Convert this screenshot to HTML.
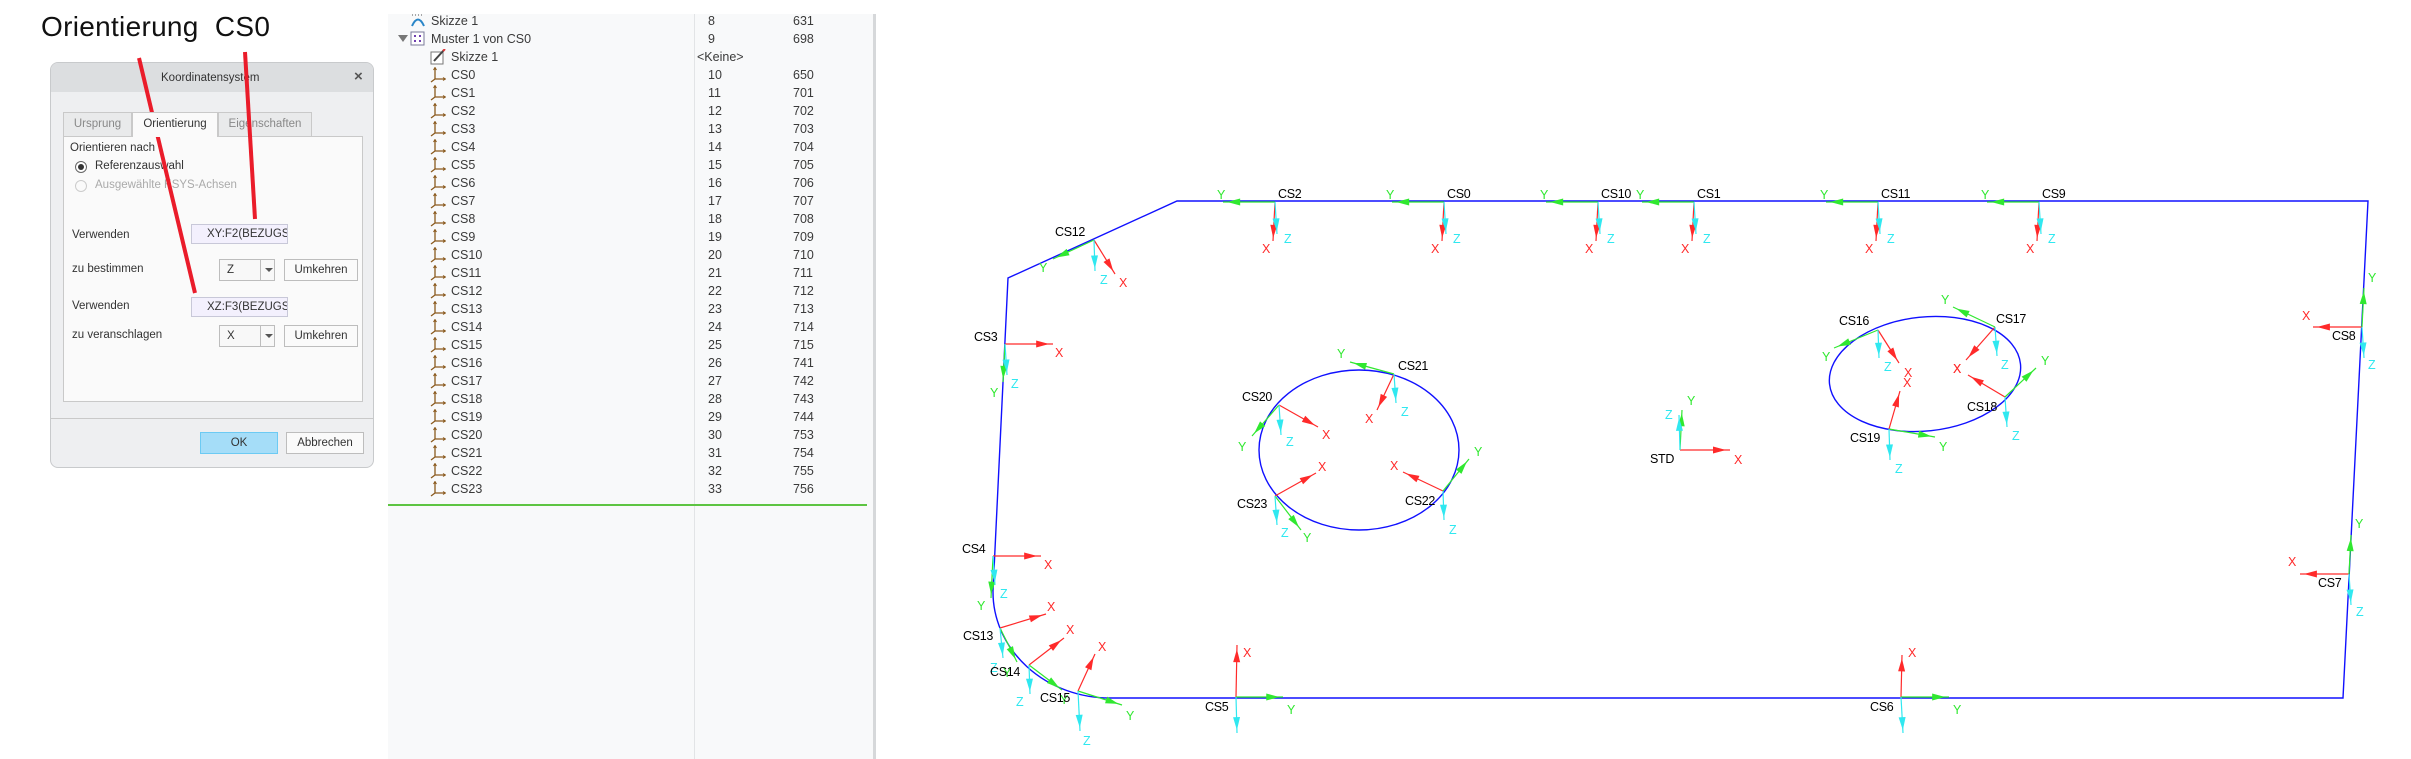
<!DOCTYPE html>
<html><head><meta charset="utf-8">
<style>
*{margin:0;padding:0;box-sizing:border-box}
body{width:2411px;height:759px;background:#fff;position:relative;overflow:hidden;font-family:"Liberation Sans",sans-serif}
.a{position:absolute;white-space:nowrap}
.dlg{position:absolute;left:50px;top:62px;width:324px;height:406px;background:#eeeff1;border:1px solid #c8cacc;border-radius:8px;overflow:hidden}
.hdr{position:absolute;left:0;top:0;width:100%;height:29px;background:#dcdee0}
.t{font-size:11.5px;color:#333}
.tab{position:absolute;top:49px;height:24px;border:1px solid #c9c9c9;border-bottom:none;background:#e9eaeb;font-size:11.5px;color:#888;text-align:center;line-height:22px}
.panel{position:absolute;left:12px;top:73px;width:300px;height:266px;background:#fafafa;border:1px solid #c9c9c9}
.inp{position:absolute;width:97px;height:20px;background:#f3f0fd;border:1px solid #c8c8d8;font-size:11.5px;color:#333;line-height:18px;padding-left:15px;overflow:hidden}
.sel{position:absolute;width:56px;height:22px;background:#f8f8f8;border:1px solid #bdbdbd;font-size:11.5px;color:#333;line-height:20px;padding-left:7px}
.sel:after{content:"";position:absolute;left:40px;top:0;width:1px;height:20px;background:#bdbdbd}
.sel b{position:absolute;left:45px;top:8px;border-left:4px solid transparent;border-right:4px solid transparent;border-top:4px solid #555}
.btn{position:absolute;width:74px;height:22px;background:#fafafa;border:1px solid #bdbdbd;font-size:11.5px;color:#333;text-align:center;line-height:20px}
.tree{position:absolute;left:388px;top:14px;width:487px;height:745px;background:#f8f9fa}
.row{position:absolute;font-size:12.5px;color:#3a3a3a;line-height:18px}
</style></head><body>
<div class="a" style="left:41px;top:11px;font-size:28px;color:#111;letter-spacing:0.3px">Orientierung&nbsp; CS0</div>

<div class="dlg">
 <div class="hdr"></div>
 <div class="a t" style="left:110px;top:9px">Koordinatensystem</div>
 <div class="a" style="left:303px;top:5px;font-size:15px;color:#555;font-weight:bold">×</div>
 <div class="tab" style="left:12px;width:69px">Ursprung</div>
 <div class="tab" style="left:81px;width:86px;background:#fafafa;color:#333;height:25px;z-index:2">Orientierung</div>
 <div class="tab" style="left:167px;width:94px">Eigenschaften</div>
 <div class="panel">
  <div class="a t" style="left:6px;top:5px">Orientieren nach</div>
  <div class="a" style="left:11px;top:24px;width:12px;height:12px;border:1px solid #666;border-radius:50%;background:#fff"><div style="position:absolute;left:2px;top:2px;width:6px;height:6px;border-radius:50%;background:#333"></div></div>
  <div class="a t" style="left:31px;top:23px">Referenzauswahl</div>
  <div class="a" style="left:11px;top:43px;width:12px;height:12px;border:1px solid #ccc;border-radius:50%"></div>
  <div class="a t" style="left:31px;top:42px;color:#aaa">Ausgewählte KSYS-Achsen</div>
  <div class="a t" style="left:8px;top:92px">Verwenden</div>
  <div class="a t" style="left:8px;top:126px">zu bestimmen</div>
  <div class="a t" style="left:8px;top:163px">Verwenden</div>
  <div class="a t" style="left:8px;top:192px">zu veranschlagen</div>
 </div>
 <div class="inp" style="left:140px;top:161px">XY:F2(BEZUGSE</div>
 <div class="sel" style="left:168px;top:196px">Z<b></b></div>
 <div class="btn" style="left:233px;top:196px">Umkehren</div>
 <div class="inp" style="left:140px;top:234px">XZ:F3(BEZUGSE</div>
 <div class="sel" style="left:168px;top:262px">X<b></b></div>
 <div class="btn" style="left:233px;top:262px">Umkehren</div>
 <div class="a" style="left:0;top:355px;width:100%;height:1px;background:#c9c9c9"></div>
 <div class="btn" style="left:149px;top:369px;width:78px;background:#a5ddf8;border-color:#6ccaf3">OK</div>
 <div class="btn" style="left:235px;top:369px;width:78px">Abbrechen</div>
</div>
<svg class="a" style="left:0;top:0" width="380" height="300">
 <line x1="139" y1="58" x2="195" y2="293" stroke="#ea1c2a" stroke-width="4"/>
 <line x1="245" y1="52" x2="255" y2="219" stroke="#ea1c2a" stroke-width="4"/>
</svg>

<div class="tree" id="tree"></div>
<div class="a" style="left:694px;top:14px;width:1px;height:745px;background:#e2e4e6"></div>
<div class="a" style="left:873px;top:14px;width:3px;height:745px;background:#d6d8da"></div>
<div class="a" style="left:388px;top:504px;width:479px;height:2px;background:#5dc442"></div>

<svg id="cad" class="a" style="left:0;top:0" width="2411" height="759" font-family="Liberation Sans, sans-serif"></svg>

<script>
var tr=document.getElementById('tree'),h='';
function row(i,x,txt,c2,c3,icon){var y=21+18*i-14-9;
 h+='<div class="row" style="left:'+(x-388)+'px;top:'+y+'px">'+txt+'</div>';
 if(c2)h+='<div class="row" style="left:'+(c2=='&lt;Keine&gt;'?697-388:708-388)+'px;top:'+y+'px">'+c2+'</div>';
 if(c3)h+='<div class="row" style="left:'+(793-388)+'px;top:'+y+'px">'+c3+'</div>';
 if(icon)h+='<div style="position:absolute;left:'+(x-388-21)+'px;top:'+(y+1)+'px">'+icon+'</div>';}
var csI='<svg width="16" height="16"><path d="M5 1V12H15M5 12L1 15" stroke="#8a5a1e" stroke-width="1.3" fill="none"/><path d="M3.5 3L5 0.5 6.5 3M13 10.5L15.5 12 13 13.5" stroke="#8a5a1e" fill="none"/></svg>';
row(0,431,'Skizze 1','8','631','<svg width="16" height="16"><path d="M2 13Q8 0 14 13" stroke="#2a86c8" stroke-width="2" fill="none"/><path d="M2 2H14" stroke="#555" stroke-dasharray="1 2"/></svg>');
row(1,431,'Muster 1 von CS0','9','698','<svg width="16" height="16"><rect x="1" y="1" width="13" height="13" fill="#fff" stroke="#7a7a9a"/><rect x="4" y="4" width="2" height="2" fill="#7040b0"/><rect x="9" y="4" width="2" height="2" fill="#7040b0"/><rect x="4" y="9" width="2" height="2" fill="#7040b0"/><rect x="9" y="9" width="2" height="2" fill="#7040b0"/></svg>');
h+='<div style="position:absolute;left:10px;top:21px;border-left:5px solid transparent;border-right:5px solid transparent;border-top:7px solid #777"></div>';
row(2,451,'Skizze 1','&lt;Keine&gt;','','<svg width="16" height="16"><rect x="1" y="3" width="12" height="12" fill="#fff" stroke="#777"/><path d="M4 12L14 1" stroke="#444" stroke-width="2"/><path d="M13 2L15 0" stroke="#d33" stroke-width="2"/></svg>');
var n2=[650,701,702,703,704,705,706,707,708,709,710,711,712,713,714,715,741,742,743,744,753,754,755,756];
for(var k=0;k<24;k++)row(3+k,451,'CS'+k,String(10+k),String(n2[k]),csI);
tr.innerHTML=h;

var s='';
var B='#1010ff',R='#ff2a2a',G='#30e830',C='#30e8f0';
s+='<path d="M1177 201H2368L2343 698H1110A117 106 0 0 1 993 591L1008 278Z" fill="none" stroke="'+B+'" stroke-width="1.4"/>';
s+='<ellipse cx="1359" cy="450" rx="100" ry="80" fill="none" stroke="'+B+'" stroke-width="1.4"/>';
s+='<ellipse cx="1925" cy="374" rx="96" ry="57" transform="rotate(-6 1925 374)" fill="none" stroke="'+B+'" stroke-width="1.4"/>';
function ar(ox,oy,tx,ty,c){var dx=tx-ox,dy=ty-oy,L=Math.sqrt(dx*dx+dy*dy),ux=dx/L,uy=dy/L;
 var hx=ox+dx*0.92,hy=oy+dy*0.92,bx=hx-ux*13,by=hy-uy*13;
 s+='<line x1="'+ox+'" y1="'+oy+'" x2="'+tx+'" y2="'+ty+'" stroke="'+c+'" stroke-width="1.2"/>';
 s+='<polygon points="'+hx+','+hy+' '+(bx-uy*3.5)+','+(by+ux*3.5)+' '+(bx+uy*3.5)+','+(by-ux*3.5)+'" fill="'+c+'"/>';}
function tx(x,y,t,c){s+='<text x="'+x+'" y="'+y+'" font-size="12.5" letter-spacing="-0.3" fill="'+c+'">'+t+'</text>';}
function cs(name,ox,oy,lx,ly,X,Y,Z){
 if(X){ar(ox,oy,X[0],X[1],R);tx(X[2],X[3],'X',R);}
 if(Y){ar(ox,oy,Y[0],Y[1],G);tx(Y[2],Y[3],'Y',G);}
 if(Z){ar(ox,oy,Z[0],Z[1],C);if(Z[2])tx(Z[2],Z[3],'Z',C);}
 tx(lx,ly,name,'#000');}
[['CS2',1275],['CS0',1444],['CS10',1598],['CS1',1694],['CS11',1878],['CS9',2039]].forEach(function(a){var x=a[1];
 cs(a[0],x,202,x+3,198,[x-2,241,x-13,253],[x-52,202,x-58,199],[x+2,234,x+9,243]);});
cs('CS12',1094,240,1055,236,[1115,274,1119,287],[1053,259,1039,272],[1095,271,1100,284]);
cs('CS3',1005,344,974,341,[1053,344,1055,357],[1003,382,990,397],[1007,375,1011,388]);
cs('CS4',993,556,962,553,[1041,556,1044,569],[991,598,977,610],[995,585,1000,598]);
cs('CS13',1000,628,963,640,[1046,614,1047,611],[1017,662,1003,677],[1003,658,990,672]);
cs('CS14',1029,665,990,676,[1064,638,1066,634],[1062,690,1060,704],[1030,694,1016,706]);
cs('CS15',1078,691,1040,702,[1095,654,1098,651],[1122,705,1126,720],[1080,731,1083,745]);
cs('CS5',1236,697,1205,711,[1237,645,1243,657],[1283,697,1287,714],[1237,733,0,0]);
cs('CS6',1901,697,1870,711,[1902,655,1908,657],[1949,697,1953,714],[1903,733,0,0]);
cs('CS7',2349,574,2318,587,[2300,574,2288,566],[2351,535,2355,528],[2351,605,2356,616]);
cs('CS8',2362,327,2332,340,[2313,327,2302,320],[2364,288,2368,282],[2364,358,2368,369]);
cs('STD',1680,450,1650,463,[1730,450,1734,464],[1682,410,1687,405],[1679,415,1665,419]);
cs('CS16',1878,330,1839,325,[1899,363,1904,377],[1834,348,1822,361],[1879,358,1884,371]);
cs('CS17',1995,327,1996,323,[1966,360,1953,373],[1953,307,1941,304],[1997,356,2001,369]);
cs('CS18',2005,397,1967,411,[1968,375,1953,373],[2036,368,2041,365],[2007,427,2012,440]);
cs('CS19',1889,429,1850,442,[1900,391,1903,387],[1935,437,1939,451],[1890,460,1895,473]);
cs('CS20',1279,405,1242,401,[1318,427,1322,439],[1252,436,1238,451],[1281,435,1286,446]);
cs('CS21',1394,374,1398,370,[1377,410,1365,423],[1350,362,1337,358],[1396,403,1401,416]);
cs('CS22',1443,491,1405,505,[1403,472,1390,470],[1469,459,1474,456],[1444,520,1449,534]);
cs('CS23',1275,496,1237,508,[1316,473,1318,471],[1301,530,1303,542],[1277,525,1281,537]);
document.getElementById('cad').innerHTML=s;
</script>
</body></html>
